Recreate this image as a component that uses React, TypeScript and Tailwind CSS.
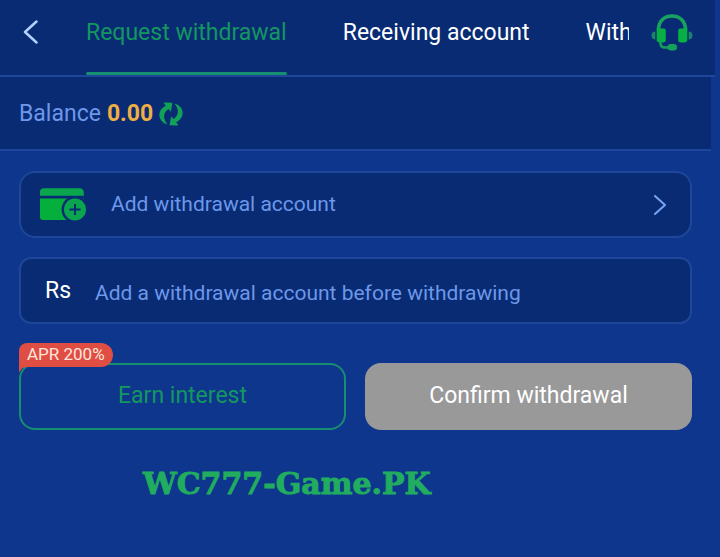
import { useState } from "react";

const tabs = ["Request withdrawal", "Receiving account", "Withdrawal records"];

function BackIcon() {
  return (
    <svg width="16" height="24" viewBox="0 0 16 24" fill="none" stroke="#b5d0ff" strokeWidth="2.5" strokeLinecap="round" strokeLinejoin="round" aria-hidden="true">
      <path d="M13.5 1.5 2 12l11.5 10.5" />
    </svg>
  );
}

function HeadsetIcon() {
  return (
    <svg width="42" height="38" viewBox="0 0 42 38" aria-hidden="true">
      <path d="M7.500 16C7.500 7.500 13 2 21 2s13.500 5.500 13.500 14" fill="none" stroke="#16a25f" strokeWidth="3.600" />
      <path d="M4.300 17.500v8C2 25.500.500 24 .500 21.500s1.500-4 3.800-4zM37.700 17.500v8c2.300 0 3.800-1.500 3.800-4s-1.500-4-3.800-4z" fill="#168766" />
      <path d="M5.700 14.500h6.800c1.500 0 2.300.8 2.300 2.300V26c0 1.500-.8 2.500-2.300 2.500h-4c-1.800 0-2.800-1-2.800-2.800zM36.300 14.500h-6.800c-1.500 0-2.300.8-2.300 2.300V26c0 1.500.8 2.500 2.300 2.500h4c1.800 0 2.800-1 2.800-2.800z" fill="#06b044" />
      <path d="M9.500 27v2c0 2.800 1.700 4.500 4.500 4.500h5" fill="none" stroke="#149e5c" strokeWidth="2.600" />
      <rect x="16.500" y="30" width="9.500" height="6.500" rx="3.200" fill="#14a258" />
    </svg>
  );
}

function RefreshIcon() {
  return (
    <svg width="24" height="24" viewBox="0 0 24 24" fill="#12a257" aria-hidden="true">
      <path d="M4.500.5 13.500.8 11.800 9.800 9.500 7C4.500 10.500 3.200 16 8.500 22.500-1.500 19.500-2.500 8.500 6.800 3.800z" />
      <path d="M19.500 23.500l-9-.3 1.700-9 2.300 2.800c5-3.500 6.300-9 1-15.500 10 3 11 14 1.700 18.700z" />
    </svg>
  );
}

function WalletIcon() {
  return (
    <svg width="48" height="34" viewBox="0 0 48 34" aria-hidden="true">
      <path d="M1 7.500V4C1 2 2.500.500 4.500.500H41c2 0 3.500 1.500 3.500 3.500v3.500z" fill="#0aa54c" />
      <path d="M1 10.500h43.500V29c0 2-1 3-3 3H4c-2 0-3-1-3-3z" fill="#04b03b" />
      <circle cx="36" cy="21.500" r="13.500" fill="#082b74" />
      <path d="M1 7.500V4C1 2 2.500.500 4.500.500H41c2 0 3.500 1.500 3.500 3.500v4.500l-1-1z" fill="#0aa54c" />
      <circle cx="36" cy="21.500" r="11" fill="#0aa54c" />
      <path d="M36 16v11M30.500 21.500h11" stroke="#082b74" strokeWidth="2" />
    </svg>
  );
}

export default function App() {
  const [activeTab, setActiveTab] = useState(0);
  const [amount, setAmount] = useState("");

  return (
    <div className="min-h-screen bg-[#0d368c] font-['Roboto',sans-serif] text-white">
      <header className="mr-[5px] flex h-[77px] border-b-2 border-[#1e4799] bg-[#082b74] pr-[22px]">
        <button type="button" aria-label="Back" className="flex w-[86px] shrink-0 items-start pt-5 pl-[23px]">
          <BackIcon />
        </button>
        <nav className="flex min-w-0 flex-1 gap-14 overflow-hidden">
          {tabs.map((tab, i) => (
            <button
              key={tab}
              type="button"
              onClick={() => setActiveTab(i)}
              className={`flex shrink-0 flex-col justify-between pt-[17px] text-[23px] leading-8 whitespace-nowrap ${
                activeTab === i ? "text-[#149661]" : "text-white"
              }`}
            >
              {tab}
              {activeTab === i && <span className="h-[3px] w-full rounded-full bg-[#168f70]" />}
            </button>
          ))}
        </nav>
        <button type="button" aria-label="Customer service" className="ml-[22px] flex shrink-0 items-start pt-[14px]">
          <HeadsetIcon />
        </button>
      </header>

      <section className="mr-[9px] flex h-[74px] items-center border-b-2 border-[#1e4799] bg-[#082b74] pt-[2px] pl-[19px] text-[23px]">
        <span className="text-[#6d98e9]">Balance</span>
        <strong className="ml-[6px] font-bold text-[#efae43]">0.00</strong>
        <button type="button" aria-label="Refresh balance" className="ml-[6px]">
          <RefreshIcon />
        </button>
      </section>

      <main className="flex flex-col pt-5 pr-7 pl-[19px]">
        <button
          type="button"
          className="flex h-[67px] items-center rounded-2xl border-2 border-[#1e4799] bg-[#082b74] pr-6 pl-[18px] text-left text-[21px] text-[#6d98e9]"
        >
          <WalletIcon />
          <span className="ml-6 flex-1">Add withdrawal account</span>
          <svg width="12" height="20" viewBox="0 0 12 20" fill="none" stroke="#79a5f5" strokeWidth="2" strokeLinecap="round" strokeLinejoin="round" aria-hidden="true">
            <path d="M1 1l10 9-10 9" />
          </svg>
        </button>

        <div className="mt-[19px] flex h-[67px] items-center rounded-xl border-2 border-[#1e4799] bg-[#082b74] px-6 pt-[2px]">
          <label htmlFor="amount" className="w-[50px] shrink-0 text-[23px]">Rs</label>
          <input
            id="amount"
            type="text"
            inputMode="decimal"
            value={amount}
            onChange={(e) => setAmount(e.target.value)}
            placeholder="Add a withdrawal account before withdrawing"
            className="min-w-0 flex-1 bg-transparent pt-1 text-[21px] outline-none placeholder:text-[#6d98e9]"
          />
        </div>

        <div className="mt-[39px] grid grid-cols-2 gap-[19px] text-[23px]">
          <div className="relative">
            <button type="button" className="h-[67px] w-full rounded-2xl border-2 border-[#168f70] text-[#149661]">
              Earn interest
            </button>
            <svg className="absolute top-0 left-0" width="8" height="10" viewBox="0 0 8 10" fill="#e04e43" aria-hidden="true">
              <path d="M0 0h8v4C4 4 2 6 0 10z" />
            </svg>
            <span className="absolute -top-5 left-0 h-6 rounded-tl-lg rounded-r-xl bg-[#e04e43] px-2 text-[17px] leading-[23px] text-[#ffe5dc]">
              APR 200%
            </span>
          </div>
          <button type="button" className="h-[67px] rounded-2xl bg-[#999999] text-white">
            Confirm withdrawal
          </button>
        </div>

        <p className="mt-9 pl-[124px] font-['DejaVu_Serif',serif] text-[30px] leading-9 font-black text-[#21ac60] [-webkit-text-stroke:1px_#21ac60]">
          WC777-Game.PK
        </p>
      </main>
    </div>
  );
}
